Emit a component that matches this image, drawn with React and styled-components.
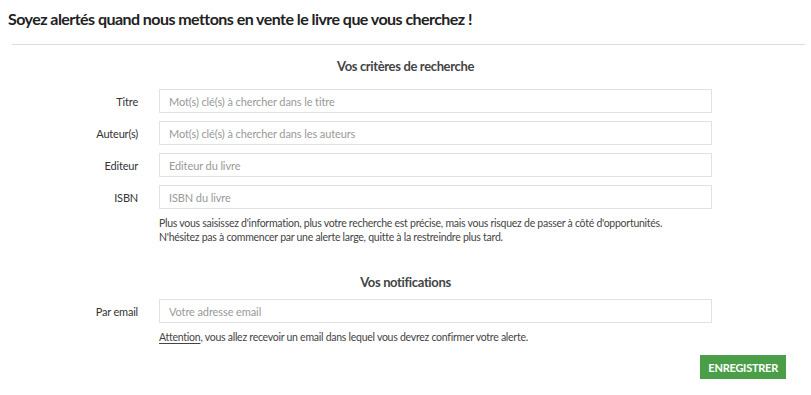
import React from "react"
import styled, { createGlobalStyle } from 'styled-components'

const GlobalStyle = createGlobalStyle`
  html, body{
    margin:0;
    padding:0;
    background:#fff;
  }
  body{
    font-family:Lato, "Liberation Sans", Arial, sans-serif;
    color:#333;
  }
`

const fields = [
  {label:'Titre', placeholder:'Mot(s) clé(s) à chercher dans le titre'},
  {label:'Auteur(s)', placeholder:'Mot(s) clé(s) à chercher dans les auteurs'},
  {label:'Editeur', placeholder:'Editeur du livre'},
  {label:'ISBN', placeholder:'ISBN du livre'},
]

function App(){
  return(
    <Page>
      <GlobalStyle />
      <Title>Soyez alertés quand nous mettons en vente le livre que vous cherchez !</Title>
      <Divider />
      <Form onSubmit={e=>e.preventDefault()}>
        <SectionTitle $top={13} $bottom={14}>Vos critères de recherche</SectionTitle>
        <Fields>
          {fields.map(f=>(
            <Row key={f.label}>
              <Label>{f.label}</Label>
              <Input type="text" placeholder={f.placeholder} />
            </Row>
          ))}
          <Row>
            <span />
            <Help>
              Plus vous saisissez d'information, plus votre recherche est précise, mais vous risquez de passer à côté d'opportunités.<br/>
              N'hésitez pas à commencer par une alerte large, quitte à la restreindre plus tard.
            </Help>
          </Row>
        </Fields>

        <SectionTitle $top={30} $bottom={8}>Vos notifications</SectionTitle>
        <Fields>
          <Row>
            <Label>Par email</Label>
            <Input type="email" placeholder="Votre adresse email" />
          </Row>
          <Row>
            <span />
            <Help><u>Attention</u>, vous allez recevoir un email dans lequel vous devrez confirmer votre alerte.</Help>
          </Row>
        </Fields>
        <Actions>
          <Button type="submit">ENREGISTRER</Button>
        </Actions>
      </Form>
    </Page>
  )
}

const Page = styled.div`
  width:811px;
  height:395px;
  overflow:hidden;
`

const Title = styled.h1`
  margin:0;
  padding:9px 8px 0;
  font-size:16px;
  line-height:20px;
  font-weight:bold;
  letter-spacing:-0.55px;
  color:#222;
`

const Divider = styled.hr`
  margin:15px 6px 0 12px;
  border:none;
  border-top:1px solid #ddd;
`

const Form = styled.form`
  display:flex;
  flex-direction:column;
`

const SectionTitle = styled.h2`
  margin:${p=>p.$top}px 0 ${p=>p.$bottom}px;
  text-align:center;
  font-size:13px;
  line-height:17px;
  font-weight:bold;
  letter-spacing:-0.35px;
  color:#444;
`

const Fields = styled.div`
  display:flex;
  flex-direction:column;
  gap:8px;
`

const Row = styled.div`
  display:grid;
  grid-template-columns:138px 553px;
  column-gap:21px;
  align-items:center;
`

const Label = styled.label`
  text-align:right;
  font-size:11px;
  letter-spacing:-0.2px;
  color:#333;
`

const Input = styled.input`
  box-sizing:border-box;
  height:24px;
  padding:0 9px;
  border:1px solid #e2e2e2;
  border-radius:0;
  font-family:inherit;
  font-size:11px;
  letter-spacing:-0.1px;
  color:#333;
  outline:none;
  &::placeholder{
    color:#999;
  }
`

const Help = styled.p`
  margin:-1px 0 0;
  font-size:10.5px;
  line-height:14px;
  letter-spacing:-0.26px;
  color:#444;
  u{
    text-underline-offset:2px;
  }
`

const Actions = styled.div`
  display:flex;
  justify-content:flex-end;
  padding:11px 25px 0 0;
`

const Button = styled.button`
  height:24px;
  padding:0 8px;
  border:none;
  border-radius:0;
  background:#4a9e47;
  color:#fff;
  font-family:inherit;
  font-size:11px;
  font-weight:bold;
  letter-spacing:-0.25px;
  cursor:pointer;
`

export default App
